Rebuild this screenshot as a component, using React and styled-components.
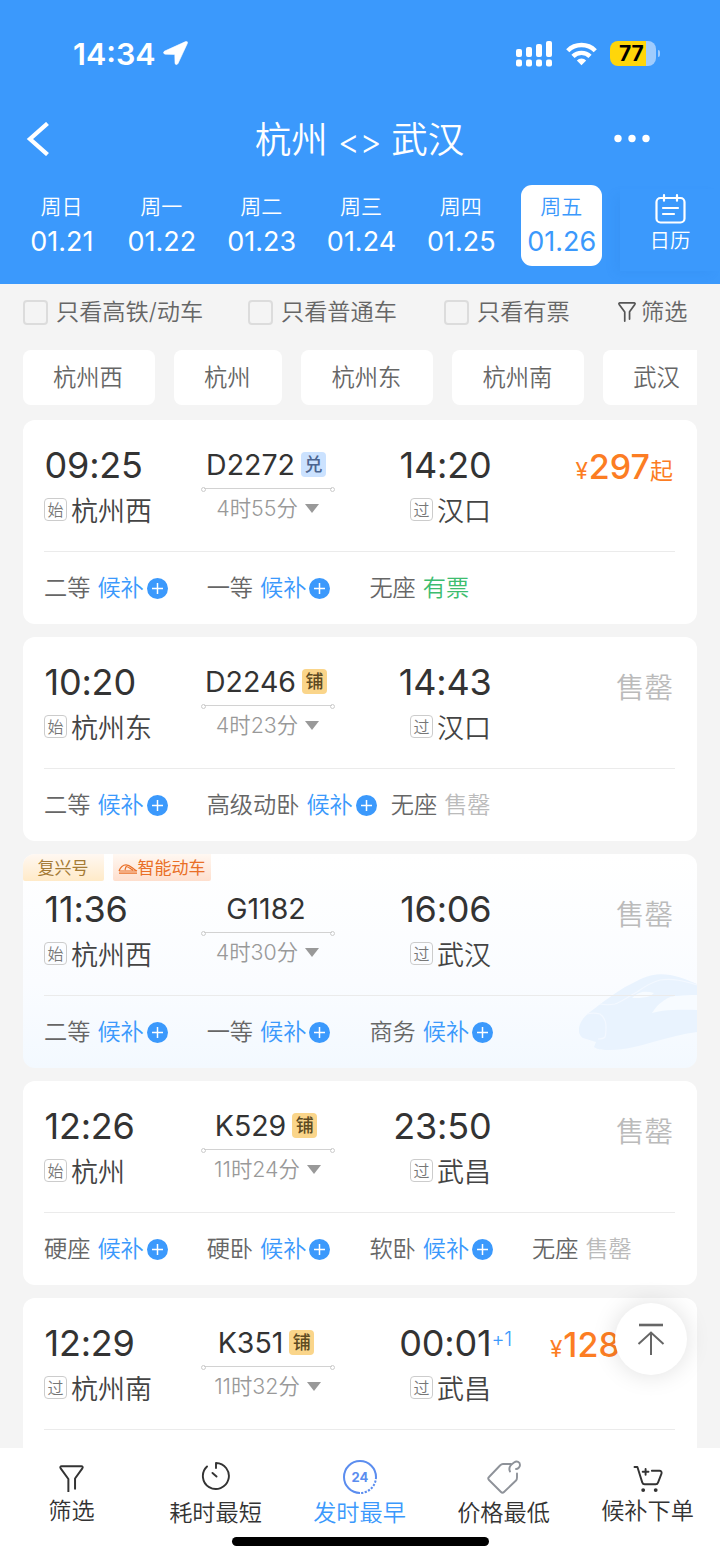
import React from 'react'
import styled, { createGlobalStyle, css } from 'styled-components'

const blue = '#3b99fc'

const trains = [
  {
    start: '09:25', from: '杭州西', fromTag: '始', code: 'D2272', mark: '兑', duration: '4时55分',
    end: '14:20', to: '汉口', price: '297',
    seats: [['二等', 'wait'], ['一等', 'wait'], ['无座', 'has']],
  },
  {
    start: '10:20', from: '杭州东', fromTag: '始', code: 'D2246', mark: '铺', duration: '4时23分',
    end: '14:43', to: '汉口',
    seats: [['二等', 'wait'], ['高级动卧', 'wait'], ['无座', 'none']],
  },
  {
    start: '11:36', from: '杭州西', fromTag: '始', code: 'G1182', duration: '4时30分',
    end: '16:06', to: '武汉', smart: true,
    seats: [['二等', 'wait'], ['一等', 'wait'], ['商务', 'wait']],
  },
  {
    start: '12:26', from: '杭州', fromTag: '始', code: 'K529', mark: '铺', duration: '11时24分',
    end: '23:50', to: '武昌',
    seats: [['硬座', 'wait'], ['硬卧', 'wait'], ['软卧', 'wait'], ['无座', 'none']],
  },
  {
    start: '12:29', from: '杭州南', fromTag: '过', code: 'K351', mark: '铺', duration: '11时32分',
    end: '00:01', nextDay: true, to: '武昌', price: '128.5',
    seats: [],
  },
]

const days = [
  ['周日', '01.21'],
  ['周一', '01.22'],
  ['周二', '01.23'],
  ['周三', '01.24'],
  ['周四', '01.25'],
  ['周五', '01.26'],
]

function FunnelIcon({ size, stroke }) {
  return (
    <svg width={size} height={size * 1.1} viewBox="0 0 24 26.4" fill="none" stroke={stroke} strokeWidth={size < 20 ? 2.3 : 1.9} strokeLinecap="round" strokeLinejoin="round">
      <path d="M9 25.4V13.4L1.6 3.2C.9 2.1 1.3 1.2 2.6 1.2h18.8c1.3 0 1.7.9 1 2L15.4 13v9.8" />
    </svg>
  )
}

function PlusIcon() {
  return (
    <svg width="21" height="21" viewBox="0 0 21 21">
      <circle cx="10.5" cy="10.5" r="10.5" fill={blue} />
      <path d="M10.5 5v11M5 10.5h11" stroke="#fff" strokeWidth="1.5" />
    </svg>
  )
}

function Seat({ name, state }) {
  return (
    <SeatItem>
      {name}
      {state === 'wait' && <SeatState $color={blue}>候补<PlusIcon /></SeatState>}
      {state === 'has' && <SeatState $color="#3dbd6f">有票</SeatState>}
      {state === 'none' && <SeatState $color="#bbb">售罄</SeatState>}
    </SeatItem>
  )
}

function TrainCard({ train }) {
  return (
    <Card $smart={train.smart}>
      {train.smart && (
        <>
          <TrainShape width="118" height="77" viewBox="0 -1 118 77">
            <path d="M0 53C1 46 6 41 11 37L24 27C34 20 43 13 54 8 63 3 72-.5 81-.7 93-1 107 4 118 9V57C103 59 89 63 74 67 60 71 46 75 31 75 25 75 19 75 15 72L17 67 4 63C1 61-1 57 0 53Z" fill="#e9f3fe" />
            <path d="M73 38c3-4 5-8 10-11 5-4 9-6 15-6 7-1 13-1 20-1v15c-8-.5-16-.5-24 0-7 0-14 1-21 3ZM53 23c3-3 6-5 10-6 4-.5 8 0 12 1-2 2-4 3-7 4-5 1-10 1-15 1Z" fill="#f7fbff" />
            <path d="M21 29c5 1 10 1 15 0 8-3 14-8 22-12 7-5 15-10 23-12 13-2 24 1 37 5M8 39c4-1 9-1 13 0 4 3 6 8 6 13s0 7-1 10c-2 2-4 2-7 2" fill="none" stroke="#f3f8ff" strokeWidth="1.2" />
          </TrainShape>
          <Ribbons>
            <Ribbon $width="81px" $color="#a57b35" $bg="#ffeac8">复兴号</Ribbon>
            <Ribbon $width="98px" $color="#e96f27" $bg="#fedfce">
              <svg width="20" height="10" viewBox="0 0 20 10" fill="none" stroke="#e96f27" strokeWidth="1.2">
                <path d="M1 7C2.5 3 5 .8 8 .8 12.5.8 14 4.5 19 7M1 7h18M1 9.2h18M8 2.5 7 6M8 2.5c3 .5 4 2 7 3.5" />
              </svg>
              智能动车
            </Ribbon>
          </Ribbons>
        </>
      )}
      <CardTop>
        <Stop>
          <Time>{train.start}</Time>
          <Station><StationTag>{train.fromTag}</StationTag>{train.from}</Station>
        </Stop>
        <Trip>
          <Code>{train.code}{train.mark && <Mark $warm={train.mark === '铺'}>{train.mark}</Mark>}</Code>
          <Line />
          <Duration>{train.duration}<Caret /></Duration>
        </Trip>
        <Stop $end>
          <Time>{train.end}{train.nextDay && <NextDay>+1</NextDay>}</Time>
          <Station><StationTag>过</StationTag>{train.to}</Station>
        </Stop>
        {train.price
          ? <Price><small>¥</small>{train.price}<em>起</em></Price>
          : <SoldOut>售罄</SoldOut>}
      </CardTop>
      <Seats>
        {train.seats.map(([name, state]) => <Seat key={name} name={name} state={state} />)}
      </Seats>
    </Card>
  )
}

function StatusBar() {
  return (
    <Status>
      <Clock>14:34</Clock>
      <svg width="25" height="25" viewBox="0 0 25 25">
        <path d="M22.6.6C24 0 25 .9 24.4 2.3L15 22.500C14.200 24.200 12 23.800 12 21.900L11.800 13.400 2.400 13.200C.3 13.100 0 10.900 1.700 10.100Z" fill="#fff" stroke="#fff" strokeWidth=".6" />
      </svg>
      <StatusRight>
        <svg width="36" height="26" viewBox="0 0 36 26" fill="#fff">
          <rect x="0" y="8" width="6" height="8" rx="2" />
          <rect x="10" y="6" width="6" height="10" rx="2" />
          <rect x="20" y="3" width="6" height="13" rx="2" />
          <rect x="30" y="0" width="6" height="16" rx="2" />
          <rect x="0" y="18.5" width="6" height="7" rx="2" />
          <rect x="10" y="18.5" width="6" height="7" rx="2" />
          <rect x="20" y="18.5" width="6" height="7" rx="2" />
          <rect x="30" y="18.5" width="6" height="7" rx="2" />
        </svg>
        <svg width="31" height="24" viewBox="0 0 32 24" fill="none" stroke="#fff" strokeWidth="4.6">
          <path d="M1.8 8.600a20 20 0 0 1 28.400 0M7.200 14.500a12.400 12.400 0 0 1 17.600 0" />
          <path d="M16 23.500l-4.800-4.800a6.600 6.600 0 0 1 9.600 0Z" fill="#fff" stroke="none" />
        </svg>
        <Battery>77</Battery>
      </StatusRight>
    </Status>
  )
}

function App() {
  return (
    <Screen>
      <GlobalStyle />
      <Header>
        <StatusBar />
        <TitleBar>
          <svg width="24" height="34" viewBox="0 0 24 34" fill="none" stroke="#fff" strokeWidth="4.3">
            <path d="M21.500 1.500 4 17l17.500 15.500" />
          </svg>
          <Title>杭州 <Arrows>&lt;&gt;</Arrows> 武汉</Title>
          <svg width="36" height="9" viewBox="0 0 36 9" fill="#fff">
            <circle cx="4" cy="4.5" r="3.7" />
            <circle cx="18" cy="4.5" r="3.7" />
            <circle cx="32" cy="4.5" r="3.7" />
          </svg>
        </TitleBar>
        <Dates>
          {days.map(([week, date], i) => (
            <Day key={date} $active={i === 5}>
              <Week>{week}</Week>
              <DayDate>{date}</DayDate>
            </Day>
          ))}
          <Calendar>
            <svg width="31" height="30" viewBox="0 0 31 30" fill="none" stroke="#fff" strokeWidth="2.2" strokeLinecap="round">
              <rect x="1.5" y="4" width="28" height="24.5" rx="4" />
              <path d="M9 1.200v5.500M22 1.200v5.500M8 14h15M8 20h11" />
            </svg>
            日历
          </Calendar>
        </Dates>
      </Header>
      <Filters>
        <Check $width="225px"><Box /><Label>只看高铁/动车</Label></Check>
        <Check $width="196px"><Box /><Label>只看普通车</Label></Check>
        <Check $width="174px"><Box /><Label>只看有票</Label></Check>
        <FilterLink><FunnelIcon size={18} stroke="#555" /><Label>筛选</Label></FilterLink>
      </Filters>
      <Chips>
        {['杭州西', '杭州', '杭州东', '杭州南', '武汉'].map((name) => <Chip key={name}>{name}</Chip>)}
      </Chips>
      <List>
        {trains.map((train) => <TrainCard key={train.code} train={train} />)}
      </List>
      <TopButton>
        <svg width="28" height="34" viewBox="0 0 28 34" fill="none" stroke="#666" strokeWidth="2">
          <path d="M2 3h24" strokeWidth="2.6" />
          <path d="M14 33V10M1.500 22 14 10.500l12.500 11.500" />
        </svg>
      </TopButton>
      <BottomBar>
        <Tabs>
          <Tab $up>
            <FunnelIcon size={25} stroke="#333" />
            筛选
          </Tab>
          <Tab>
            <svg width="30" height="33" viewBox="0 0 30 33" fill="none" stroke="#333" strokeWidth="1.9" strokeLinecap="round" strokeLinejoin="round">
              <path d="M6 5.500A13 13 0 1 0 15 2v5M11.500 12l4 3.500" />
            </svg>
            耗时最短
          </Tab>
          <Tab $active>
            <svg width="34" height="34" viewBox="0 0 34 34" fill="none" stroke="#5b8def" strokeWidth="2">
              <path d="M17 33A16 16 0 1 1 33 17" />
              <path d="M33 17A16 16 0 0 1 17 33" strokeDasharray="2.200 1.400" />
              <text x="17" y="22" textAnchor="middle" fontFamily="Inter" fontWeight="700" fontSize="13" fill="#5b8def" stroke="none">24</text>
            </svg>
            发时最早
          </Tab>
          <Tab>
            <svg width="34" height="34" viewBox="0 0 34 34" fill="none" stroke="#8e9299" strokeWidth="1.9" strokeLinecap="round" strokeLinejoin="round">
              <path d="M24 4h-8c-1.500 0-2 .5-3 1.500L2 17c-1 1-1 2 0 3l12 12c1 1 2 1 3 0l12-11.500c1-1 1-1.500 1-3v-4" />
              <path d="M23 11.500c-2-4 1-7 4-9 3-2 6-.5 6 2.500 0 2-2 4-4 4" />
            </svg>
            价格最低
          </Tab>
          <Tab $up>
            <svg width="30" height="26" viewBox="0 0 30 27" fill="none" stroke="#333" strokeWidth="2" strokeLinecap="round" strokeLinejoin="round">
              <path d="M1 1h3l5 16c.5 1.500 1 2 2.500 2H23c1.500 0 2-.5 2.500-2L29 8c.5-2-.5-3-2-3h-8M9.500 6h6M12.500 3v6" />
              <circle cx="10" cy="25" r="1" fill="#333" />
              <circle cx="23" cy="25" r="1" fill="#333" />
            </svg>
            候补下单
          </Tab>
        </Tabs>
        <HomeLine />
      </BottomBar>
    </Screen>
  )
}

export default App

const GlobalStyle = createGlobalStyle`
  * {
    box-sizing: border-box;
  }

  body {
    margin: 0;
    font-family: Inter, 'Noto Sans CJK SC', sans-serif;
    background: #f4f4f4;
  }

  svg {
    display: block;
    flex-shrink: 0;
  }
`
const Screen = styled.div`
  position: relative;
  display: flex;
  flex-direction: column;
  width: 720px;
  height: 1561px;
  overflow: hidden;
  background: #f4f4f4;
`
const Header = styled.div`
  flex-shrink: 0;
  height: 284px;
  color: #fff;
  background: ${blue};
`
const Status = styled.div`
  display: flex;
  align-items: center;
  height: 107px;
  padding: 0 64px 0 73px;
`
const Clock = styled.div`
  width: 90px;
  font-size: 30.5px;
  font-weight: 600;
`
const StatusRight = styled.div`
  display: flex;
  align-items: center;
  gap: 13.5px;
  margin-left: auto;
`
const Battery = styled.div`
  position: relative;
  width: 46px;
  height: 25px;
  border-radius: 8px;
  background: linear-gradient(90deg, #ffd60a 36px, #a0ccfd 36px);
  color: #000;
  font-size: 21px;
  font-weight: 700;
  line-height: 25px;
  padding-left: 9px;

  &::after {
    content: '';
    position: absolute;
    right: -4px;
    top: 9px;
    width: 2px;
    height: 7px;
    border-radius: 0 2px 2px 0;
    background: #a0ccfd;
  }
`
const TitleBar = styled.div`
  display: flex;
  align-items: center;
  justify-content: space-between;
  height: 63px;
  padding: 0 70px 0 26px;
`
const Title = styled.div`
  display: flex;
  align-items: center;
  gap: 10px;
  margin-left: 55px;
  padding-top: 4px;
  font-size: 36.5px;
  font-weight: 350;
  line-height: 59px;
`
const Arrows = styled.span`
  font-size: 34px;
  letter-spacing: -0.5px;
  padding-top: 2px;
`
const Dates = styled.div`
  display: flex;
  gap: 19px;
  padding: 15px 0 0 21px;
`
const Day = styled.div`
  display: flex;
  flex-direction: column;
  align-items: center;
  width: 81px;
  height: 81px;
  padding-top: 5px;
  border-radius: 11px;
  ${({ $active }) => $active && css`
    position: relative;
    left: 0.5px;
    color: ${blue};
    background: #fff;
  `}
`
const Week = styled.div`
  font-size: 21px;
  font-weight: 350;
  line-height: 34px;
`
const DayDate = styled.div`
  padding-left: 1px;
  font-size: 27px;
  line-height: 35px;
`
const Calendar = styled.div`
  display: flex;
  flex-direction: column;
  align-items: center;
  width: 100px;
  height: 82px;
  margin-top: 4px;
  padding-top: 5px;
  font-size: 20.5px;
  font-weight: 350;
  line-height: 34px;
  box-shadow: -7px 4px 10px -2px rgba(30, 110, 210, 0.1);
`
const Filters = styled.div`
  display: flex;
  align-items: center;
  flex-shrink: 0;
  height: 56px;
  padding-left: 23px;
  color: #666;
  font-size: 23.2px;
  font-weight: 350;
`
const Check = styled.div`
  display: flex;
  align-items: center;
  gap: 8px;
  width: ${({ $width }) => $width};
`
const Box = styled.span`
  width: 25px;
  height: 25px;
  border: 2px solid #dcdcdc;
  border-radius: 4px;
`
const Label = styled.span`
  padding-bottom: 4px;
`
const FilterLink = styled.div`
  display: flex;
  align-items: center;
  gap: 5px;
`
const Chips = styled.div`
  display: flex;
  flex-shrink: 0;
  gap: 19px;
  width: 674px;
  margin: 10px 23px 15px;
  overflow: hidden;
`
const Chip = styled.div`
  flex-shrink: 0;
  height: 55px;
  padding: 0 32px 0 30px;
  border-radius: 8px;
  background: #fff;
  color: #666;
  font-size: 23.3px;
  font-weight: 350;
  line-height: 56px;
`
const List = styled.div`
  display: flex;
  flex: 1;
  flex-direction: column;
  gap: 13px;
  min-height: 0;
  padding: 0 23px;
  overflow: hidden;
`
const Card = styled.div`
  position: relative;
  flex-shrink: 0;
  height: ${({ $smart }) => ($smart ? 214 : 204)}px;
  padding: ${({ $smart }) => ($smart ? 0 : 17)}px 22px 0 21px;
  border-radius: 12px;
  overflow: hidden;
  background: ${({ $smart }) => ($smart ? 'linear-gradient(#fff, #fafcff 60%, #f3f9ff)' : '#fff')};
`
const TrainShape = styled.svg`
  position: absolute;
  right: 0;
  bottom: 17px;
`
const Ribbons = styled.div`
  display: flex;
  gap: 9px;
  height: 27px;
  margin-left: -21px;
`
const Ribbon = styled.div`
  display: flex;
  align-items: center;
  justify-content: center;
  width: ${({ $width }) => $width};
  padding: 2px 1px 0 0;
  border-radius: 0 0 2px 2px;
  color: ${({ $color }) => $color};
  background: linear-gradient(#fff8f2, ${({ $bg }) => $bg});
  font-size: 17px;
  line-height: 25px;
`
const CardTop = styled.div`
  position: relative;
  display: grid;
  grid-template-columns: 157px 134px 156px 1fr;
  height: 115px;
  border-bottom: 1px solid #ebebeb;
`
const Stop = styled.div`
  display: flex;
  flex-direction: column;
  align-items: ${({ $end }) => ($end ? 'flex-end' : 'flex-start')};
`
const Time = styled.div`
  position: relative;
  left: 0.5px;
  color: #333;
  font-size: 36px;
  letter-spacing: -0.2px;
  line-height: 57px;
`
const NextDay = styled.span`
  position: absolute;
  left: 100%;
  top: 9px;
  color: ${blue};
  font-size: 20px;
  font-weight: 350;
  line-height: 30px;
`
const Station = styled.div`
  display: flex;
  align-items: center;
  gap: 4px;
  margin-top: 1px;
  color: #444;
  font-size: 27px;
  font-weight: 350;
  line-height: 34px;
`
const StationTag = styled.span`
  align-self: flex-start;
  width: 23px;
  height: 23px;
  margin-top: 3px;
  border: 1px solid #ccc;
  border-radius: 4px;
  color: #777;
  font-size: 16px;
  line-height: 22px;
  text-align: center;
`
const Trip = styled.div`
  display: flex;
  flex-direction: column;
  align-items: center;
`
const Code = styled.div`
  display: flex;
  align-items: center;
  gap: 6px;
  height: 51px;
  padding: 4px 4px 0 0;
  color: #333;
  font-size: 28.5px;
`
const Mark = styled.span`
  width: 25px;
  height: 25px;
  border-radius: 4px;
  color: ${({ $warm }) => ($warm ? '#5d4a22' : '#4c6590')};
  background: ${({ $warm }) => ($warm ? '#fad58a' : '#cbe2ff')};
  font-size: 18px;
  font-weight: 500;
  line-height: 26px;
  text-align: center;
`
const Line = styled.div`
  position: relative;
  width: 128px;
  height: 1px;
  background: #d2d2d2;

  &::before,
  &::after {
    content: '';
    position: absolute;
    top: -1px;
    width: 3px;
    height: 3px;
    border: 1px solid #ccc;
    border-radius: 50%;
  }

  &::before {
    left: -3px;
  }

  &::after {
    right: -3px;
  }
`
const Duration = styled.div`
  display: flex;
  align-items: center;
  gap: 7px;
  padding-right: 1px;
  color: #999;
  font-size: 21.4px;
  font-weight: 350;
  line-height: 39px;
`
const Caret = styled.span`
  border: 7px solid transparent;
  border-top: 9px solid #999;
  border-bottom: 0;
`
const Price = styled.div`
  padding-right: 2px;
  color: #fc7d23;
  font-size: 34px;
  font-weight: 500;
  line-height: 60px;
  text-align: right;
  white-space: nowrap;

  small {
    margin-right: 1px;
    font-size: 22.5px;
    font-weight: 400;
  }

  em {
    font-size: 23px;
    font-style: normal;
    font-weight: 400;
  }
`
const SoldOut = styled.div`
  padding-right: 2px;
  color: #bbb;
  font-size: 28.5px;
  font-weight: 350;
  line-height: 67px;
  text-align: right;
`
const Seats = styled.div`
  position: relative;
  display: flex;
  gap: 14px;
  padding-top: 18px;
`
const SeatItem = styled.div`
  display: flex;
  gap: 7px;
  min-width: 148.7px;
  color: #666;
  font-size: 23.2px;
  font-weight: 350;
  line-height: 36px;
  white-space: nowrap;
`
const SeatState = styled.span`
  display: flex;
  align-items: center;
  gap: 3px;
  color: ${({ $color }) => $color};
`
const TopButton = styled.div`
  position: absolute;
  left: 615px;
  top: 1303px;
  display: flex;
  align-items: center;
  justify-content: center;
  width: 72px;
  height: 72px;
  border-radius: 50%;
  background: #fff;
  box-shadow: 0 0 24px rgba(0, 0, 0, 0.13);
`
const BottomBar = styled.div`
  position: relative;
  flex-shrink: 0;
  height: 113px;
  background: #fff;
`
const Tabs = styled.div`
  display: grid;
  grid-template-columns: repeat(5, 1fr);
  height: 89px;
`
const Tab = styled.div`
  display: flex;
  flex-direction: column;
  align-items: center;
  justify-content: flex-end;
  gap: 1px;
  padding: 0 1px ${({ $up }) => ($up ? 9 : 7)}px 0;
  color: ${({ $active }) => ($active ? blue : '#333')};
  font-size: 23.2px;
  font-weight: 350;
  line-height: 34px;

  svg {
    margin-bottom: 1px;
  }
`
const HomeLine = styled.div`
  width: 257px;
  height: 9px;
  margin: 0 auto;
  border-radius: 5px;
  background: #000;
`
